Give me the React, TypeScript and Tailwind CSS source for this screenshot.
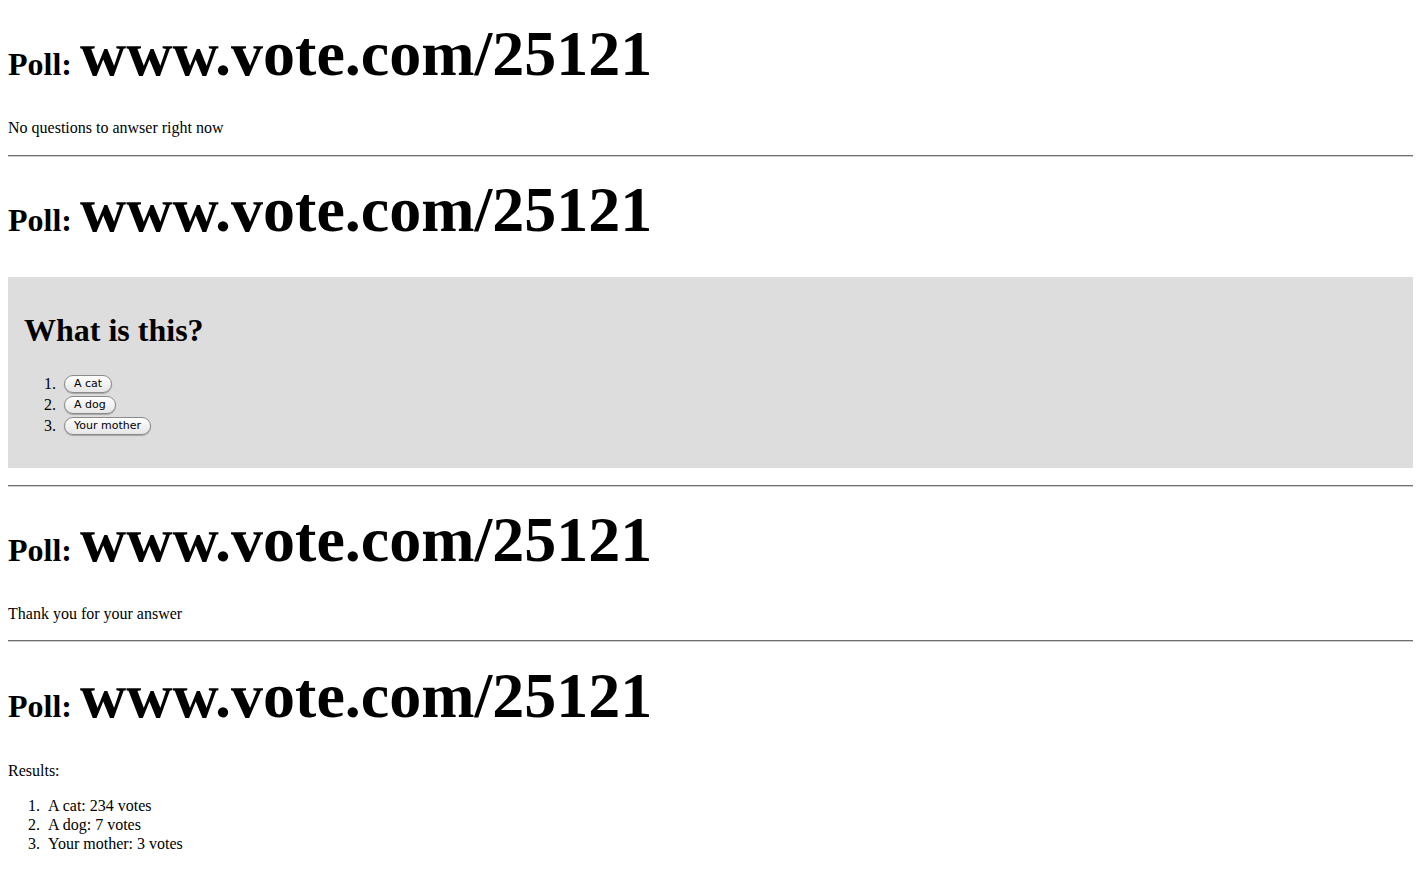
import React from "react";

const url = "www.vote.com/25121";

function PollTitle({ className = "" }: { className?: string }) {
  return (
    <h1 className={`text-[32px] font-bold leading-none ${className}`}>
      Poll: <span className="text-[64px] leading-[64px]">{url}</span>
    </h1>
  );
}

function Rule({ className = "" }: { className?: string }) {
  return <hr className={`h-0 border-t border-b border-t-[#6f6f6f] border-b-[#cfcfcf] ${className}`} />;
}

const options = ["A cat", "A dog", "Your mother"];
const results = [
  { label: "A cat", votes: 234 },
  { label: "A dog", votes: 7 },
  { label: "Your mother", votes: 3 },
];

export default function App() {
  return (
    <div className="min-h-screen bg-white text-black px-2 flex flex-col font-['Liberation_Serif','Times_New_Roman',serif]">
      {/* waiting state */}
      <PollTitle className="mt-[22px]" />
      <p className="mt-[32px] text-[16px] leading-[19px]">No questions to anwser right now</p>
      <Rule className="mt-[18px]" />

      {/* question state */}
      <PollTitle className="mt-[21px]" />
      <div className="mt-[35px] bg-[#dddddd] px-4 pt-4 pb-8">
        <h2 className="mt-[19px] text-[32px] font-bold leading-[37px]">What is this?</h2>
        <ol className="mt-[24px]">
          {options.map((opt, i) => (
            <li key={opt} className="flex items-center h-[21px] text-[16px]">
              <span className="w-[40px] pr-[8px] text-right">{i + 1}.</span>
              <button className="h-[18px] px-[9px] rounded-full border border-[#8a8a8a] bg-linear-to-b from-white to-[#e6e6e6] shadow-[0_1px_1px_rgba(0,0,0,0.25)] text-[11px] leading-[16px] text-black font-['DejaVu_Sans','Liberation_Sans',sans-serif]">
                {opt}
              </button>
            </li>
          ))}
        </ol>
      </div>
      <Rule className="mt-[17px]" />

      {/* answered state */}
      <PollTitle className="mt-[21px]" />
      <p className="mt-[32px] text-[16px] leading-[19px]">Thank you for your answer</p>
      <Rule className="mt-[17px]" />

      {/* results state */}
      <PollTitle className="mt-[22px]" />
      <p className="mt-[33px] text-[16px] leading-[19px]">Results:</p>
      <ol className="mt-4 text-[16px] leading-[19px]">
        {results.map((r, i) => (
          <li key={r.label} className="flex">
            <span className="w-[40px] pr-[8px] text-right">{i + 1}.</span>
            <span>
              {r.label}: {r.votes} votes
            </span>
          </li>
        ))}
      </ol>
    </div>
  );
}
